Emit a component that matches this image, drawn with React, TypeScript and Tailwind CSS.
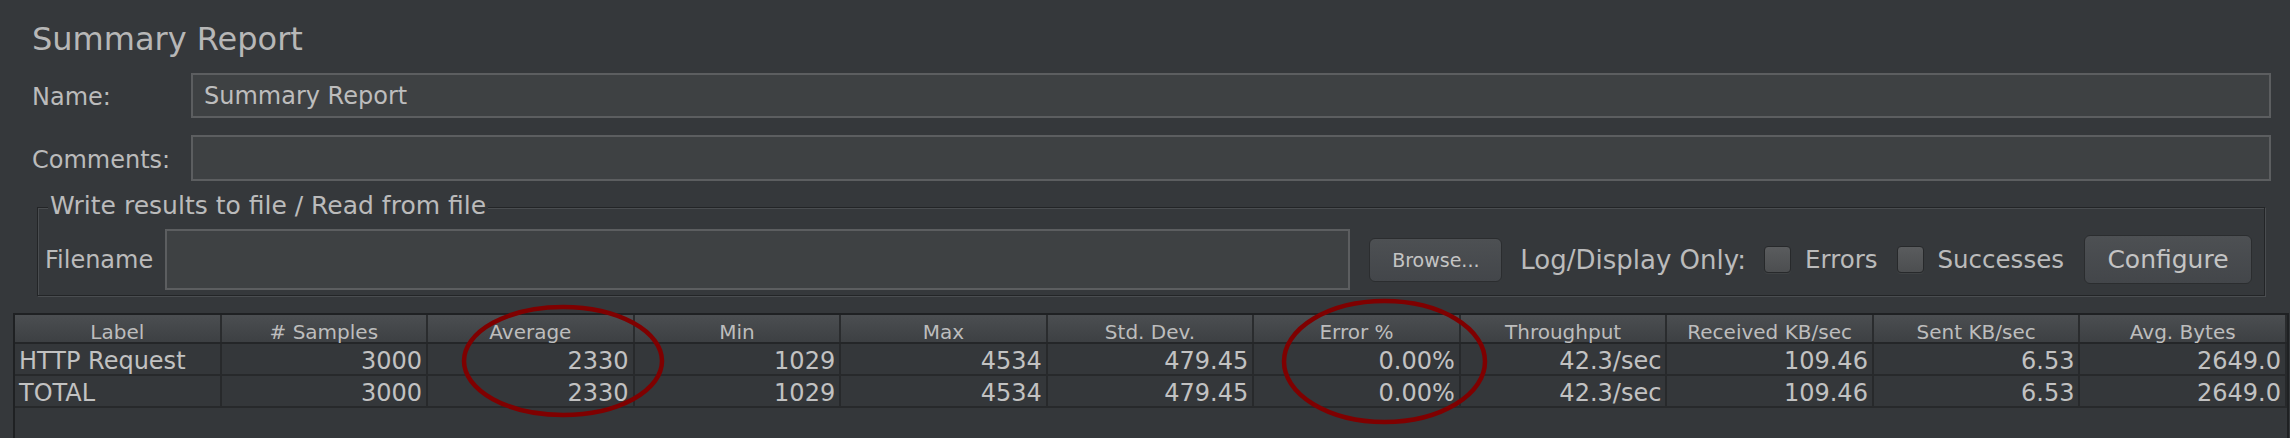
import React from 'react'

const headers = [
  'Label',
  '# Samples',
  'Average',
  'Min',
  'Max',
  'Std. Dev.',
  'Error %',
  'Throughput',
  'Received KB/sec',
  'Sent KB/sec',
  'Avg. Bytes',
]

const rows = [
  ['HTTP Request', '3000', '2330', '1029', '4534', '479.45', '0.00%', '42.3/sec', '109.46', '6.53', '2649.0'],
  ['TOTAL', '3000', '2330', '1029', '4534', '479.45', '0.00%', '42.3/sec', '109.46', '6.53', '2649.0'],
]

function Field({ label, value, height, lead }: { label: string; value?: string; height: string; lead: string }) {
  return (
    <div className="flex">
      <div className={`w-[159px] shrink-0 text-[24px] ${height} ${lead}`}>{label}</div>
      <div
        className={`flex-1 ${height} border-2 border-[#5c5e60] bg-[#3e4143] pl-[11px] text-[24px] leading-[43px] text-[#bdbdbd]`}
      >
        {value}
      </div>
    </div>
  )
}

function Checkbox({ label }: { label: string }) {
  return (
    <div className="flex items-center gap-[14px]">
      <span className="w-[27px] h-[27px] rounded-[4px] border border-[#27292b] bg-gradient-to-b from-[#5a5c5e] to-[#4c4e50] shadow-[0_1px_0_#3f4244]" />
      <span className="text-[24.5px] leading-[30px]">{label}</span>
    </div>
  )
}

export default function App() {
  return (
    <div className="relative w-[2290px] h-[438px] overflow-hidden bg-[#35383b] text-[#bbbbbb] font-['DejaVu_Sans',sans-serif]">
      <div className="pl-[32px] pr-[19px] pt-[19px]">
        <h1 className="text-[32px] leading-[40px] h-[40px] text-[#b7b7b7]">Summary Report</h1>
        <div className="mt-[14px]">
          <Field label="Name:" value="Summary Report" height="h-[45px]" lead="leading-[49px]" />
        </div>
        <div className="mt-[17px]">
          <Field label="Comments:" height="h-[46px]" lead="leading-[51px]" />
        </div>
      </div>

      {/* Write results group */}
      <div className="relative ml-[37px] w-[2228px] mt-[26px] border border-[#232527] shadow-[inset_1px_1px_0_#4a4d50,1px_1px_0_#4a4d50]">
        <span className="absolute -top-[17px] left-[10px] px-[2px] bg-[#35383b] text-[25px] leading-[30px]">
          Write results to file / Read from file
        </span>
        <div className="flex items-center pl-[7px] pr-[12px] pt-[21px] pb-[5px]">
          <span className="text-[24px] leading-[30px]">Filename</span>
          <div className="ml-[12px] flex-1 h-[61px] border-2 border-[#5c5e60] bg-[#3e4143]" />
          <button className="ml-[19px] w-[133px] h-[44px] rounded-[6px] border border-[#2b2d2f] bg-gradient-to-b from-[#4d5053] to-[#43464a] text-[19px] leading-[24px] text-[#c4c4c4]">
            Browse...
          </button>
          <span className="ml-[18px] text-[26px] leading-[30px]">Log/Display Only:</span>
          <div className="ml-[18px]">
            <Checkbox label="Errors" />
          </div>
          <div className="ml-[19px]">
            <Checkbox label="Successes" />
          </div>
          <button className="ml-[20px] w-[168px] h-[49px] rounded-[6px] border border-[#2b2d2f] bg-gradient-to-b from-[#4d5053] to-[#43464a] text-[25px] leading-[30px] text-[#c4c4c4]">
            Configure
          </button>
        </div>
      </div>

      {/* Results table */}
      <div className="ml-[13px] mt-[17px] w-[2276px] h-[200px] border-l-2 border-t-2 border-r-2 border-[#1f2123] bg-[#34373a]">
        <div className="grid grid-cols-11 h-[29px] border-b-2 border-[#242628] bg-gradient-to-b from-[#4b4e51] to-[#3d4043]">
          {headers.map((h) => (
            <div
              key={h}
              className="h-[27px] border-r-2 border-[#2a2c2e] pt-[4px] text-center text-[20px] leading-[26px] text-[#bdbdbd] whitespace-nowrap"
            >
              {h}
            </div>
          ))}
        </div>
        {rows.map((r) => (
          <div key={r[0]} className="grid grid-cols-11 h-[32px] border-b-2 border-[#27292b]">
            {r.map((c, i) => (
              <div
                key={i}
                className={`h-[30px] border-r-2 border-[#27292b] pt-[2px] text-[24px] leading-[30px] text-[#c2c2c2] whitespace-nowrap ${
                  i === 0 ? 'pl-[4px] text-left' : 'pr-[4px] text-right'
                }`}
              >
                {c}
              </div>
            ))}
          </div>
        ))}
      </div>

      {/* annotation circles */}
      <svg className="absolute inset-0 pointer-events-none" width="2290" height="438" viewBox="0 0 2290 438">
        <ellipse cx="563" cy="361" rx="99" ry="54" fill="none" stroke="#7f0000" strokeWidth="4.5" />
        <ellipse cx="1384.5" cy="361.5" rx="100.5" ry="60.5" fill="none" stroke="#7f0000" strokeWidth="4.5" />
      </svg>
    </div>
  )
}
